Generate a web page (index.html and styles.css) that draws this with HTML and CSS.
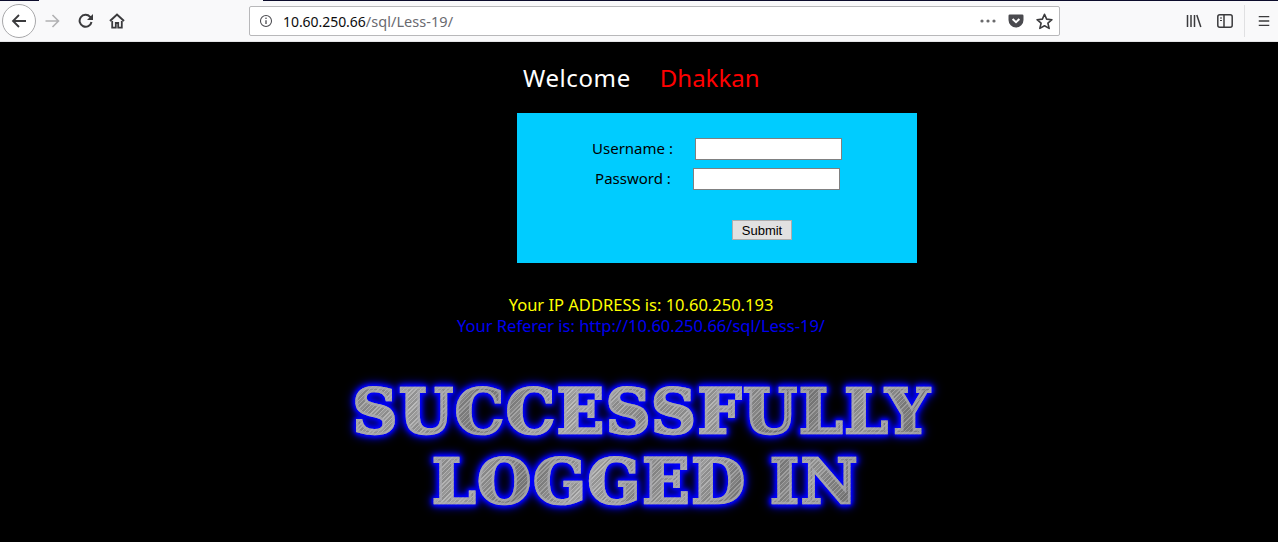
FILE: index.html
```html
<!DOCTYPE html>
<html lang="en">
<head>
<meta charset="utf-8">
<title>Less-19</title>
<link rel="stylesheet" href="styles.css">
</head>
<body>
<div class="tabstrip"><span class="tab-edge tab-left"></span><span class="tab-edge tab-right"></span></div>
<header class="toolbar">
  <div class="back-btn">
    <svg class="icon" viewBox="0 0 16 16"><path d="M15 8H2M8 2L2 8l6 6" fill="none" stroke="#3b3b3d" stroke-width="1.8"/></svg>
  </div>
  <svg class="icon forward" viewBox="0 0 16 16"><path d="M1 8h13M8 2l6 6-6 6" fill="none" stroke="#b1b1b3" stroke-width="1.6"/></svg>
  <svg class="icon reload" viewBox="0 0 16 16"><path d="M13.5 9a6 6 0 1 1-1.4-5.2L14 5.5" fill="none" stroke="#3b3b3d" stroke-width="2"/><path d="M15 1v6H9z" fill="#3b3b3d"/></svg>
  <svg class="icon home" viewBox="0 0 16 16"><path d="M1 8l7-6.5L15 8" fill="none" stroke="#3b3b3d" stroke-width="2"/><path d="M3.2 8v6.6h3.6V10h2.4v4.6h3.6V8" fill="none" stroke="#3b3b3d" stroke-width="1.8"/></svg>
  <div class="urlbar">
    <svg class="icon info" viewBox="0 0 16 16"><circle cx="8" cy="8" r="6.3" fill="none" stroke="#4a4a4f" stroke-width="1.2"/><path d="M8 7v4.5" stroke="#4a4a4f" stroke-width="1.5"/><circle cx="8" cy="4.9" r=".95" fill="#4a4a4f"/></svg>
    <span class="url"><span class="host">10.60.250.66</span>/sql/Less-19/</span>
    <span class="url-actions">
      <svg class="dots" viewBox="0 0 16 4"><circle cx="2" cy="2" r="1.6"/><circle cx="8" cy="2" r="1.6"/><circle cx="14" cy="2" r="1.6"/></svg>
      <svg class="icon pocket" viewBox="0 0 16 16"><path d="M1.8 1.5h12.4A1.3 1.3 0 0 1 15.5 2.8V7A7.5 7.5 0 0 1 .5 7V2.8A1.3 1.3 0 0 1 1.8 1.5z" fill="#4a4a4f"/><path d="M4.6 6L8 9.2 11.4 6" fill="none" stroke="#fff" stroke-width="2"/></svg>
      <svg class="icon star" viewBox="0 0 16 16"><path d="M8 1.2l2 4.6 5 .5-3.8 3.3 1.2 4.9L8 12l-4.4 2.5 1.2-4.9L1 6.3l5-.5z" fill="none" stroke="#3b3b3d" stroke-width="1.5" stroke-linejoin="round"/></svg>
    </span>
  </div>
  <div class="tools">
    <svg class="icon library" viewBox="0 0 16 16"><path d="M1.5 2v12M5 2v12M8.5 2v12M10.8 2l4 12" fill="none" stroke="#3b3b3d" stroke-width="1.5"/></svg>
    <svg class="icon sidebar" viewBox="0 0 16 16"><rect x=".8" y="1.8" width="14.4" height="12.4" rx="2" fill="none" stroke="#3b3b3d" stroke-width="1.5"/><path d="M7 2v12" stroke="#3b3b3d" stroke-width="1.5"/><path d="M3 5h2M3 7.5h2" stroke="#3b3b3d" stroke-width="1.2"/></svg>
    <span class="divider"></span>
    <svg class="icon menu" viewBox="0 0 16 16"><path d="M2 3h12M2 8h12M2 13h12" stroke="#3b3b3d" stroke-width="1.6"/></svg>
  </div>
</header>
<main class="page">
  <div class="welcome"><span class="greet">Welcome</span><span class="name">Dhakkan</span></div>
  <form class="login" onsubmit="return false">
    <div class="row"><label class="label" for="u">Username :</label><input id="u" class="field" type="text"></div>
    <div class="row row-pass"><label class="label" for="p">Password :</label><input id="p" class="field" type="password"></div>
    <div class="submit-row"><button class="submit" type="submit">Submit</button></div>
  </form>
  <div class="ip">Your IP ADDRESS is: 10.60.250.193</div>
  <div class="referer">Your Referer is: http://10.60.250.66/sql/Less-19/</div>
  <div class="banner">
    <div class="banner-line">SUCCESSFULLY</div>
    <div class="banner-line banner-second">LOGGED IN</div>
  </div>
</main>
</body>
</html>
```
FILE: styles.css
```css
* { box-sizing: border-box; }
html, body { margin: 0; height: 100%; overflow: hidden; }
body { background: #000; font-family: "Noto Sans", "Open Sans", sans-serif; color: #fff; }

.tabstrip { display: flex; height: 1px; background: #f9f9fa; }
.tab-edge { background: #0c0c2c; height: 1px; }
.tab-left { width: 39px; }
.tab-right { margin-left: 224px; flex: 1; }

.toolbar { display: flex; align-items: center; height: 41px; background: #f9f9fa; border-bottom: 1px solid #e4e4e6; }
.icon { width: 16px; height: 16px; flex: none; display: block; }
.back-btn { width: 34px; height: 34px; margin-left: 2px; border: 1px solid #a8a8aa; border-radius: 50%; background: #fff; display: flex; align-items: center; justify-content: center; flex: none; }
.forward { margin-left: 8px; width: 17px; }
.reload { margin-left: 17px; }
.home { margin-left: 15px; }

.urlbar { display: flex; align-items: center; width: 811px; height: 30px; margin-left: 124px; padding: 0 6px 0 9px; background: #fff; border: 1px solid #b8b8ba; border-radius: 2px; flex: none; }
.info { width: 14px; height: 14px; }
.url { margin-left: 10px; font-size: 14.5px; color: #6a6a6f; letter-spacing: .05px; white-space: nowrap; }
.host { color: #0c0c0d; font-size: 14px; letter-spacing: -.05px; }
.url-actions { margin-left: auto; display: flex; align-items: center; }
.dots { width: 16px; height: 4px; fill: #6a6a6c; display: block; }
.pocket { margin-left: 12px; }
.star { margin-left: 12px; width: 17px; height: 17px; }

.tools { display: flex; align-items: center; flex: 1; height: 100%; padding-left: 126px; }
.library { width: 16px; }
.sidebar { margin-left: 15px; }
.divider { width: 1px; height: 32px; margin-left: 11px; background: #e0e0e2; }
.menu { margin-left: 12px; width: 14px; }

.page { display: flex; flex-direction: column; }
.welcome { display: flex; gap: 29px; padding-left: 523px; margin-top: 19px; height: 33px; font-size: 24px; line-height: 33px; }
.greet { letter-spacing: .6px; }
.name { color: #f00; }

.login { width: 400px; height: 150px; margin: 19px 0 0 517px; padding-top: 25px; background: #0cf; color: #000; font-size: 15px; display: flex; flex-direction: column; align-items: center; }
.row { display: flex; align-items: center; height: 22px; margin-bottom: 8px; }
.row-pass { padding-left: 1px; }
.label { margin-right: 22px; padding-bottom: 2px; }
.field { width: 147px; height: 22px; padding: 0 2px; background: #fff; border: 1px solid #808080; border-radius: 0; }
.submit-row { margin: 22px 0 0 90px; }
.submit { display: block; width: 60px; height: 20px; padding: 0; font: 13px "Liberation Sans", Arial, sans-serif; color: #000; background: #e1e1e1; border: 1px solid #adadad; border-radius: 0; }

.ip, .referer { text-align: center; font-size: 16.5px; line-height: 21px; white-space: nowrap; padding-left: 4px; }
.ip { margin-top: 31px; color: #ff0; }
.referer { color: #0000f0; padding-left: 4px; }

.banner { margin-top: 41px; padding-left: 6px; text-align: center; font-family: "DejaVu Serif", serif; font-weight: 700; font-size: 62px; line-height: 70px; letter-spacing: 1.7px; filter: drop-shadow(0 0 1px #00f) drop-shadow(0 0 2px #00f) drop-shadow(0 0 2px #00f) drop-shadow(0 0 4px #0000d8); }
.banner-line { width: fit-content; margin: 0 auto; color: transparent; background: repeating-linear-gradient(135deg, rgba(60,60,60,.28) 0 2px, rgba(220,220,220,.2) 2px 3px, rgba(60,60,60,.18) 3px 5px, rgba(200,200,200,.18) 5px 6px), linear-gradient(115deg, #9a9a9a 0, #b4b4b4 12%, #858585 24%, #b8b8b8 38%, #9c9c9c 50%, #b0b0b0 62%, #808080 74%, #a4a4a4 86%, #747474 100%); -webkit-background-clip: text; background-clip: text; -webkit-text-stroke: 2.6px rgba(172,172,178,.75); }
.banner-second { padding-left: 7px; }
```
